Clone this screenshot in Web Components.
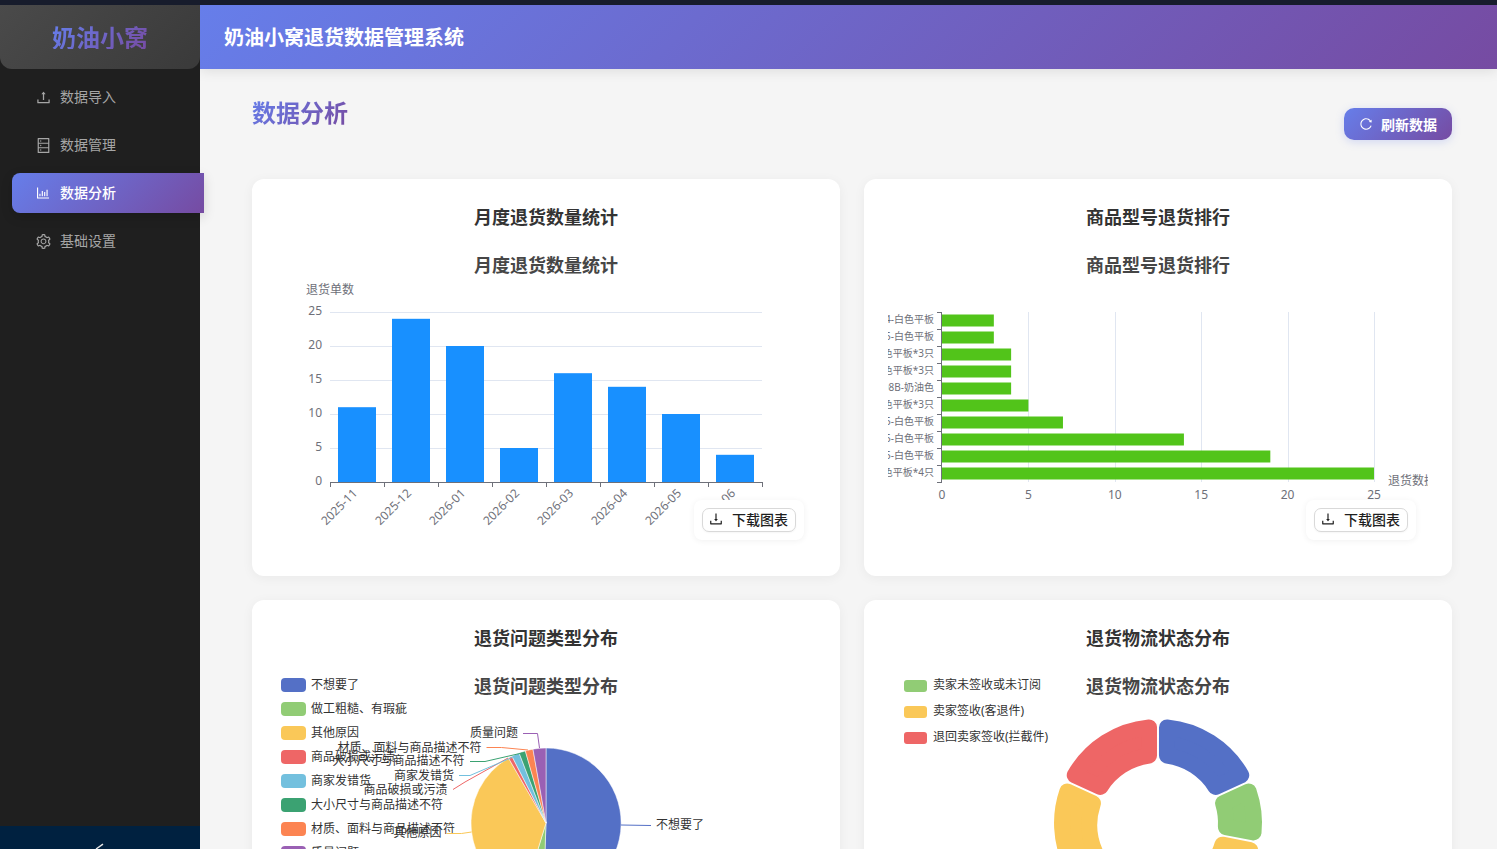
<!DOCTYPE html>
<html lang="zh-CN">
<head>
<meta charset="utf-8">
<title>奶油小窝退货数据管理系统</title>
<style>
  html, body { margin: 0; height: 100%; overflow: hidden; background: #171c2c; }
  body { font-family: "Noto Sans CJK SC", sans-serif; padding-top: 5px; box-sizing: border-box; }
</style>
</head>
<body>
<app-shell>
  <side-bar slot="side">
    <nav-item icon="upload">数据导入</nav-item>
    <nav-item icon="database">数据管理</nav-item>
    <nav-item icon="chart" size="16" active>数据分析</nav-item>
    <nav-item icon="setting">基础设置</nav-item>
  </side-bar>
  <top-header slot="top">奶油小窝退货数据管理系统</top-header>
  <page-head>数据分析</page-head>
  <chart-grid>
    <chart-card heading="月度退货数量统计"><bar-chart></bar-chart></chart-card>
    <chart-card heading="商品型号退货排行"><rank-chart></rank-chart></chart-card>
    <chart-card heading="退货问题类型分布"><pie-chart></pie-chart></chart-card>
    <chart-card heading="退货物流状态分布"><donut-chart></donut-chart></chart-card>
  </chart-grid>
</app-shell>

<script>
const ICONS = {
  upload: 'M400 317.7h73.9V656c0 4.4 3.6 8 8 8h60c4.4 0 8-3.6 8-8V317.7H624c6.7 0 10.4-7.7 6.3-12.9L518.3 163a8 8 0 0 0-12.6 0l-112 141.7c-4.1 5.3-.4 13 6.3 13zM878 626h-60c-4.4 0-8 3.6-8 8v154H214V634c0-4.4-3.6-8-8-8h-60c-4.4 0-8 3.6-8 8v198c0 17.7 14.3 32 32 32h684c17.7 0 32-14.3 32-32V634c0-4.4-3.6-8-8-8z',
  download: 'M505.7 661a8 8 0 0 0 12.6 0l112-141.7c4.1-5.2.4-12.9-6.3-12.9h-74.1V168c0-4.4-3.6-8-8-8h-60c-4.4 0-8 3.6-8 8v338.3H400c-6.7 0-10.4 7.7-6.3 12.9l112 141.8zM878 626h-60c-4.4 0-8 3.6-8 8v154H214V634c0-4.4-3.6-8-8-8h-60c-4.4 0-8 3.6-8 8v198c0 17.7 14.3 32 32 32h684c17.7 0 32-14.3 32-32V634c0-4.4-3.6-8-8-8z',
  reload: 'M909.1 209.3l-56.4 44.1C775.8 155.1 656.2 92 521.9 92 290 92 102.3 279.5 102 511.5 101.7 743.7 289.8 932 521.9 932c181.3 0 335.8-115 394.6-276.1 1.5-4.2-.7-8.9-4.9-10.3l-56.7-19.5a8 8 0 0 0-10.1 4.8c-1.8 5-3.8 10-5.9 14.9-17.3 41-42.1 77.8-73.7 109.4A344.77 344.77 0 0 1 655.9 829c-42.3 17.9-87.4 27-133.8 27-46.5 0-91.5-9.1-133.8-27A341.5 341.5 0 0 1 279 755.2a342.16 342.16 0 0 1-73.7-109.4c-17.9-42.4-27-87.4-27-133.9s9.1-91.5 27-133.9c17.3-41 42.1-77.8 73.7-109.4 31.6-31.6 68.4-56.4 109.3-73.8 42.3-17.9 87.4-27 133.8-27 46.5 0 91.5 9.1 133.8 27a341.5 341.5 0 0 1 109.3 73.8c9.9 9.9 19.2 20.4 27.8 31.4l-60.2 47a8 8 0 0 0 3 14.1l175.6 43c5 1.2 9.9-2.6 9.9-7.7l.8-180.9c-.1-6.6-7.8-10.3-13-6.2z',
  chart: 'M888 792H200V168c0-4.4-3.6-8-8-8h-56c-4.4 0-8 3.6-8 8v688c0 4.4 3.6 8 8 8h752c4.4 0 8-3.6 8-8v-56c0-4.4-3.6-8-8-8zm-600-80h56c4.4 0 8-3.6 8-8V560c0-4.4-3.6-8-8-8h-56c-4.4 0-8 3.6-8 8v144c0 4.4 3.6 8 8 8zm152 0h56c4.4 0 8-3.6 8-8V384c0-4.4-3.6-8-8-8h-56c-4.4 0-8 3.6-8 8v320c0 4.4 3.6 8 8 8zm152 0h56c4.4 0 8-3.6 8-8V462c0-4.4-3.6-8-8-8h-56c-4.4 0-8 3.6-8 8v242c0 4.4 3.6 8 8 8zm152 0h56c4.4 0 8-3.6 8-8V304c0-4.4-3.6-8-8-8h-56c-4.4 0-8 3.6-8 8v400c0 4.4 3.6 8 8 8z',
  database: 'M832 64H192c-17.7 0-32 14.3-32 32v832c0 17.7 14.3 32 32 32h640c17.7 0 32-14.3 32-32V96c0-17.7-14.3-32-32-32zm-600 72h560v208H232V136zm560 480H232V408h560v208zm0 272H232V680h560v208zM304 240a40 40 0 1 0 80 0 40 40 0 1 0-80 0zm0 272a40 40 0 1 0 80 0 40 40 0 1 0-80 0zm0 272a40 40 0 1 0 80 0 40 40 0 1 0-80 0z',
  setting: 'M924.8 625.7l-65.5-56c3.1-19 4.7-38.4 4.7-57.8s-1.6-38.8-4.7-57.8l65.5-56a32.03 32.03 0 0 0 9.3-35.2l-.9-2.6a443.74 443.74 0 0 0-79.7-137.9l-1.8-2.1a32.12 32.12 0 0 0-35.1-9.5l-81.3 28.9c-30-24.6-63.5-44-99.7-57.6l-15.7-85a32.05 32.05 0 0 0-25.8-25.7l-2.7-.5c-52.1-9.4-106.9-9.4-159 0l-2.7.5a32.05 32.05 0 0 0-25.8 25.7l-15.8 85.4a351.86 351.86 0 0 0-99 57.4l-81.9-29.1a32 32 0 0 0-35.1 9.5l-1.8 2.1a446.02 446.02 0 0 0-79.7 137.9l-.9 2.6c-4.5 12.5-.8 26.5 9.3 35.2l66.3 56.6c-3.1 18.8-4.6 38-4.6 57.1 0 19.2 1.5 38.4 4.6 57.1L99 625.5a32.03 32.03 0 0 0-9.3 35.2l.9 2.6c18.1 50.4 44.9 96.9 79.7 137.9l1.8 2.1a32.12 32.12 0 0 0 35.1 9.5l81.9-29.1c29.8 24.5 63.1 43.9 99 57.4l15.8 85.4a32.05 32.05 0 0 0 25.8 25.7l2.7.5a449.4 449.4 0 0 0 159 0l2.7-.5a32.05 32.05 0 0 0 25.8-25.7l15.7-85a350 350 0 0 0 99.7-57.6l81.3 28.9a32 32 0 0 0 35.1-9.5l1.8-2.1c34.8-41.1 61.6-87.5 79.7-137.9l.9-2.6c4.5-12.3.8-26.3-9.3-35zM788.3 465.9c2.5 15.1 3.8 30.6 3.8 46.1s-1.3 31-3.8 46.1l-6.6 40.1 74.7 63.9a370.03 370.03 0 0 1-42.6 73.6L721 702.8l-31.4 25.8c-23.9 19.6-50.5 35-79.3 45.8l-38.1 14.3-17.9 97a377.5 377.5 0 0 1-85 0l-17.9-97.2-37.8-14.5c-28.5-10.8-55-26.2-78.7-45.7l-31.4-25.9-93.4 33.2c-17-22.9-31.2-47.6-42.6-73.6l75.5-64.5-6.5-40c-2.4-14.9-3.7-30.3-3.7-45.5 0-15.3 1.2-30.6 3.7-45.5l6.5-40-75.5-64.5c11.3-26.1 25.6-50.7 42.6-73.6l93.4 33.2 31.4-25.9c23.7-19.5 50.2-34.9 78.7-45.7l37.9-14.3 17.9-97.2c28.1-3.2 56.8-3.2 85 0l17.9 97 38.1 14.3c28.7 10.8 55.4 26.2 79.3 45.8l31.4 25.8 92.8-32.9c17 22.9 31.2 47.6 42.6 73.6L781.8 426l6.5 39.9zM512 326c-97.2 0-176 78.8-176 176s78.8 176 176 176 176-78.8 176-176-78.8-176-176-176zm79.2 255.2A111.6 111.6 0 0 1 512 614c-29.9 0-58-11.7-79.2-32.8A111.6 111.6 0 0 1 400 502c0-29.9 11.7-58 32.8-79.2C454 401.6 482.1 390 512 390c29.9 0 58 11.6 79.2 32.8A111.6 111.6 0 0 1 624 502c0 29.9-11.7 58-32.8 79.2z'
};
const iconSvg = (name, size) => `<svg width="${size}" height="${size}" viewBox="0 0 1024 1024" fill="currentColor"><path d="${ICONS[name]}"/></svg>`;
const GRADIENT = 'linear-gradient(135deg, #667eea 0%, #764ba2 100%)';
const CHART_FONT = '"Noto Sans", "Noto Sans CJK SC", sans-serif';

// text helper, all chart coordinates are page coordinates through the viewBox
function label(x, y, str, { size = 12, fill = '#6e7079', anchor = 'start', weight = 'normal', extra = '' } = {}) {
  return `<text x="${x}" y="${y}" font-size="${size}" fill="${fill}" text-anchor="${anchor}" font-weight="${weight}" dominant-baseline="central" ${extra}>${str}</text>`;
}
function chartSvg(x, y, body) {
  return `<style>:host{display:block;height:311px}svg{display:block;font-family:${CHART_FONT}}</style>
    <svg width="540" height="311" viewBox="${x} ${y} 540 311">${body}</svg>`;
}
const chartTitle = (x, y, str) => label(x, y, str, { size: 18, fill: '#464646', anchor: 'middle', weight: 'bold' });

class AppShell extends HTMLElement {
  constructor() {
    super();
    this.attachShadow({ mode: 'open' }).innerHTML = `
      <style>
        :host { display: grid; grid-template-columns: 200px 1fr; height: 844px; background: #f5f5f5; }
        .main { display: flex; flex-direction: column; min-width: 0; height: 844px; overflow: hidden; }
        .content { padding: 24px 45px 24px 52px; }
      </style>
      <slot name="side"></slot>
      <div class="main">
        <slot name="top"></slot>
        <div class="content"><slot></slot></div>
      </div>`;
  }
}

class SideBar extends HTMLElement {
  constructor() {
    super();
    this.attachShadow({ mode: 'open' }).innerHTML = `
      <style>
        :host { display: flex; flex-direction: column; background: #1f1f1f; height: 844px; position: relative; z-index: 2; }
        .logo {
          height: 64px; display: flex; align-items: center; justify-content: center;
          background: linear-gradient(135deg, #4a4a4a, #3a3a3a);
          border-radius: 0 0 12px 12px;
        }
        .logo span {
          font-size: 24px; font-weight: 700; line-height: 1;
          background: ${GRADIENT}; -webkit-background-clip: text; background-clip: text; color: transparent;
        }
        nav { display: flex; flex-direction: column; gap: 8px; padding: 8px 0 0 12px; }
        .foot { margin-top: auto; height: 23px; background: #002140; overflow: hidden; }
        .foot svg { display: block; margin: 17px 0 0 95px; }
      </style>
      <div class="logo"><span>奶油小窝</span></div>
      <nav><slot></slot></nav>
      <div class="foot"><svg width="10" height="6" viewBox="0 0 10 6"><path d="M1 6 L8 1.2" stroke="#e8e8e8" stroke-width="1.4" fill="none"/></svg></div>`;
  }
}

class NavItem extends HTMLElement {
  constructor() {
    super();
    this.attachShadow({ mode: 'open' });
  }
  connectedCallback() {
    const active = this.hasAttribute('active');
    this.shadowRoot.innerHTML = `
      <style>
        :host {
          display: flex; align-items: center; gap: 8.5px; height: 40px; padding-left: 22.5px;
          margin-right: -4px; font-size: 14px; color: ${active ? '#fff' : '#a6a6a6'};
          ${active ? `background: ${GRADIENT}; border-radius: 8px 0 0 8px; box-shadow: 0 4px 12px rgba(0,0,0,.15); font-weight: 500;` : ''}
        }
        :host(:not([active])) { margin-right: 0; }
        .ic { width: 17px; display: flex; justify-content: center; }
        .txt { margin-top: -2px; }
        svg { display: block; }
      </style>
      <span class="ic">${iconSvg(this.getAttribute('icon'), this.getAttribute('size') || 17)}</span><span class="txt"><slot></slot></span>`;
  }
}

class TopHeader extends HTMLElement {
  constructor() {
    super();
    this.attachShadow({ mode: 'open' }).innerHTML = `
      <style>
        :host {
          display: flex; align-items: center; height: 64px; box-sizing: border-box; flex: none; padding: 0 0 1px 24px;
          background: ${GRADIENT}; color: #fff; font-size: 20px; font-weight: 700;
          box-shadow: 0 2px 12px rgba(0,0,0,.1); position: relative; z-index: 1;
        }
      </style><slot></slot>`;
  }
}

class PageHead extends HTMLElement {
  constructor() {
    super();
    this.attachShadow({ mode: 'open' }).innerHTML = `
      <style>
        :host { display: flex; justify-content: space-between; align-items: flex-start; height: 86px; }
        h2 {
          margin: 3px 0 0; font-size: 24px; line-height: 32px; font-weight: 700;
          background: ${GRADIENT}; -webkit-background-clip: text; background-clip: text; color: transparent;
        }
        button {
          margin-top: 15px; height: 32px; width: 108px; border: 0; border-radius: 10px; padding: 0 0 0 15px;
          display: flex; align-items: center; gap: 8px; color: #fff; background: ${GRADIENT};
          font: 700 14px "Noto Sans CJK SC", sans-serif; box-shadow: 0 2px 8px rgba(102,126,234,.25);
        }
        svg { display: block; }
      </style>
      <h2><slot></slot></h2>
      <button>${iconSvg('reload', 14)}刷新数据</button>`;
  }
}

class ChartGrid extends HTMLElement {
  constructor() {
    super();
    this.attachShadow({ mode: 'open' }).innerHTML = `
      <style>:host { display: grid; grid-template-columns: 1fr 1fr; gap: 24px; }</style><slot></slot>`;
  }
}

class ChartCard extends HTMLElement {
  constructor() {
    super();
    this.attachShadow({ mode: 'open' });
  }
  connectedCallback() {
    this.shadowRoot.innerHTML = `
      <style>
        :host {
          display: block; position: relative; background: #fff; border-radius: 12px; padding: 24px;
          box-shadow: 0 2px 12px rgba(0,0,0,.05);
        }
        h3 { margin: 0 0 24px; height: 14px; line-height: 26px; text-align: center; font-size: 18px; font-weight: 700; color: #333; }
        .tool {
          position: absolute; right: 36px; bottom: 36px; width: 110px; height: 40px; box-sizing: border-box;
          display: flex; align-items: center; justify-content: center; background: #fff; border-radius: 8px;
          box-shadow: 0 1px 6px rgba(0,0,0,.06);
        }
        .tool button {
          width: 94px; height: 24px; box-sizing: border-box; padding: 0 2px 2px 0; border: 1px solid #d9d9d9; border-radius: 7px; background: #fff;
          display: flex; align-items: center; justify-content: center; gap: 8px; color: #1f1f1f;
          font: 500 14px "Noto Sans CJK SC", sans-serif; box-shadow: 0 1px 2px rgba(0,0,0,.04);
        }
        .tool svg { display: block; }
      </style>
      <h3>${this.getAttribute('heading')}</h3>
      <slot></slot>
      <div class="tool"><button>${iconSvg('download', 16)}下载图表</button></div>`;
  }
}

class BarChart extends HTMLElement {
  constructor() {
    super();
    this.attachShadow({ mode: 'open' });
  }
  connectedCallback() {
    const months = ['2025-11', '2025-12', '2026-01', '2026-02', '2026-03', '2026-04', '2026-05', '2026-06'];
    const values = [11, 24, 20, 5, 16, 14, 10, 4];
    const left = 330, step = 54, base = 482, unit = 6.8;
    let s = chartTitle(546, 265, '月度退货数量统计');
    s += label(330, 289, '退货单数', { anchor: 'middle' });
    [5, 10, 15, 20, 25].forEach(v => {
      const y = base - v * unit;
      s += `<line x1="${left}" x2="762" y1="${y + .5}" y2="${y + .5}" stroke="#e0e6f1"/>`;
    });
    [0, 5, 10, 15, 20, 25].forEach(v => {
      s += label(322, base - v * unit - 2, v, { anchor: 'end', size: 12 });
    });
    values.forEach((v, i) => {
      s += `<rect x="${left + i * step + 8}" y="${base - v * unit}" width="38" height="${v * unit}" fill="#1890ff"/>`;
    });
    s += `<line x1="${left}" x2="762" y1="482.5" y2="482.5" stroke="#6e7079"/>`;
    for (let i = 0; i <= 8; i++) {
      s += `<line x1="${left + i * step + .5}" x2="${left + i * step + .5}" y1="482" y2="487" stroke="#6e7079"/>`;
    }
    months.forEach((m, i) => {
      const cx = left + i * step + 28;
      s += `<text x="${cx}" y="494" font-size="12" fill="#6e7079" text-anchor="end" transform="rotate(-45 ${cx} 494)">${m}</text>`;
    });
    this.shadowRoot.innerHTML = chartSvg(276, 241, s);
  }
}

class RankChart extends HTMLElement {
  constructor() {
    super();
    this.attachShadow({ mode: 'open' });
  }
  connectedCallback() {
    const rows = [
      ['CY-2204-白色平板', 3], ['CY-2205-白色平板', 3], ['CY-2201-白色平板*3只', 4], ['CY-2203-白色平板*3只', 4],
      ['CY-2208B-奶油色', 4], ['CY-2202-白色平板*3只', 5], ['CY-2215-白色平板', 7], ['CY-2225-白色平板', 14],
      ['CY-2235-白色平板', 19], ['CY-2201-白色平板*4只', 25]
    ];
    const left = 942, unit = 17.28, top = 312, rowH = 17;
    let s = chartTitle(1158, 265, '商品型号退货排行');
    for (let v = 5; v <= 25; v += 5) {
      const x = Math.round(left + v * unit);
      s += `<line x1="${x + .5}" x2="${x + .5}" y1="${top}" y2="${top + 170}" stroke="#e0e6f1"/>`;
    }
    s += `<line x1="${left - .5}" x2="${left - .5}" y1="${top}" y2="${top + 170}" stroke="#6e7079"/>`;
    for (let i = 0; i <= rows.length; i++) {
      s += `<line x1="${left - 5}" x2="${left}" y1="${top + i * rowH + .5}" y2="${top + i * rowH + .5}" stroke="#6e7079"/>`;
    }
    rows.forEach(([name, v], i) => {
      s += `<rect x="${left}" y="${top + i * rowH + 2.5}" width="${v * unit}" height="12" fill="#52c41a"/>`;
      s += label(934, top + i * rowH + 7, name, { anchor: 'end', size: 10 });
    });
    [0, 5, 10, 15, 20, 25].forEach(v => {
      s += label(left + v * unit, 494, v, { anchor: 'middle' });
    });
    s += label(1388, 480, '退货数据', {});
    this.shadowRoot.innerHTML = chartSvg(888, 241, s);
  }
}

// start/end in degrees clockwise from the top
const polar = (cx, cy, r, deg) => {
  const a = deg * Math.PI / 180;
  return [(cx + r * Math.sin(a)).toFixed(2), (cy - r * Math.cos(a)).toFixed(2)];
};

class PieChart extends HTMLElement {
  constructor() {
    super();
    this.attachShadow({ mode: 'open' });
  }
  connectedCallback() {
    const cx = 546, cy = 823, r = 75;
    const items = [
      ['不想要了', '#5470c6', 0, 182, [[621, 825], [651, 825.5]], [656, 824, 'start']],
      ['做工粗糙、有瑕疵', '#91cc75', 182, 197],
      ['其他原因', '#fac858', 197, 330, [[471.5, 832], [461.5, 833.5], [446.5, 833.5]], [441.5, 832.5, 'end']],
      ['商品破损或污渍', '#ee6666', 330, 333, [[508, 758], [465, 782], [453, 789.5]], [447.5, 789, 'end']],
      ['商家发错货', '#73c0de', 333, 339, [[513, 757], [470, 775.5], [459, 775.5]], [454, 775, 'end']],
      ['大小尺寸与商品描述不符', '#3ba272', 339, 344, [[522, 753], [485, 761.5], [470, 761.5]], [464.5, 760.5, 'end']],
      ['材质、面料与商品描述不符', '#fc8452', 344, 350, [[528, 750], [501.5, 747.5], [486.5, 747.5]], [481.5, 747, 'end']],
      ['质量问题', '#9a60b4', 350, 360, [[539.5, 748], [537.5, 733.5], [523, 733.5]], [518, 732.5, 'end']]
    ];
    let s = '';
    items.forEach((it, i) => {
      const y = 685 + i * 24;
      s += `<rect x="281" y="${y - 7}" width="25" height="14" rx="4" fill="${it[1]}"/>`;
      s += label(311, y - .5, it[0], { fill: '#333' });
    });
    s += chartTitle(546, 686, '退货问题类型分布');
    items.forEach(([, color, a, b]) => {
      const [x1, y1] = polar(cx, cy, r, a), [x2, y2] = polar(cx, cy, r, b);
      s += `<path d="M${cx} ${cy}L${x1} ${y1}A${r} ${r} 0 ${b - a > 180 ? 1 : 0} 1 ${x2} ${y2}Z" fill="${color}" stroke="#fff" stroke-width=".5"/>`;
    });
    items.forEach(([name, color, , , line, text]) => {
      if (!line) return;
      s += `<polyline points="${line.map(p => p.join(',')).join(' ')}" fill="none" stroke="${color}"/>`;
      s += label(text[0], text[1], name, { fill: '#333', anchor: text[2] });
    });
    this.shadowRoot.innerHTML = chartSvg(276, 662, s);
  }
}

class DonutChart extends HTMLElement {
  constructor() {
    super();
    this.attachShadow({ mode: 'open' });
  }
  connectedCallback() {
    const cx = 1158, cy = 823, ro = 104, ri = 60, round = 8, gap = 1;
    const slices = [['#5470c6', 0, 65.5], ['#91cc75', 65.5, 101], ['#fac858', 101, 294.5], ['#ee6666', 294.5, 360]];
    const legend = [['卖家未签收或未订阅', '#91cc75'], ['卖家签收(客退件)', '#fac858'], ['退回卖家签收(拦截件)', '#ee6666']];
    let s = '';
    legend.forEach(([name, color], i) => {
      const y = 686 + i * 26;
      s += `<rect x="904" y="${y - 6}" width="23" height="12" rx="3" fill="${color}"/>`;
      s += label(933, y - 2, name, { fill: '#333' });
    });
    s += chartTitle(1158, 686, '退货物流状态分布');
    slices.forEach(([color, a, b]) => {
      // inset sector plus a thick round-joined stroke gives the rounded corners
      const R = ro - round, I = ri + round;
      const dO = (round + gap) / R * 180 / Math.PI, dI = (round + gap) / I * 180 / Math.PI;
      const big = b - a > 180 ? 1 : 0;
      const [x1, y1] = polar(cx, cy, R, a + dO), [x2, y2] = polar(cx, cy, R, b - dO);
      const [x3, y3] = polar(cx, cy, I, b - dI), [x4, y4] = polar(cx, cy, I, a + dI);
      s += `<path d="M${x1} ${y1}A${R} ${R} 0 ${big} 1 ${x2} ${y2}L${x3} ${y3}A${I} ${I} 0 ${big} 0 ${x4} ${y4}Z" fill="${color}" stroke="${color}" stroke-width="${round * 2}" stroke-linejoin="round"/>`;
    });
    this.shadowRoot.innerHTML = chartSvg(888, 662, s);
  }
}

customElements.define('app-shell', AppShell);
customElements.define('side-bar', SideBar);
customElements.define('nav-item', NavItem);
customElements.define('top-header', TopHeader);
customElements.define('page-head', PageHead);
customElements.define('chart-grid', ChartGrid);
customElements.define('chart-card', ChartCard);
customElements.define('bar-chart', BarChart);
customElements.define('rank-chart', RankChart);
customElements.define('pie-chart', PieChart);
customElements.define('donut-chart', DonutChart);
</script>
</body>
</html>
